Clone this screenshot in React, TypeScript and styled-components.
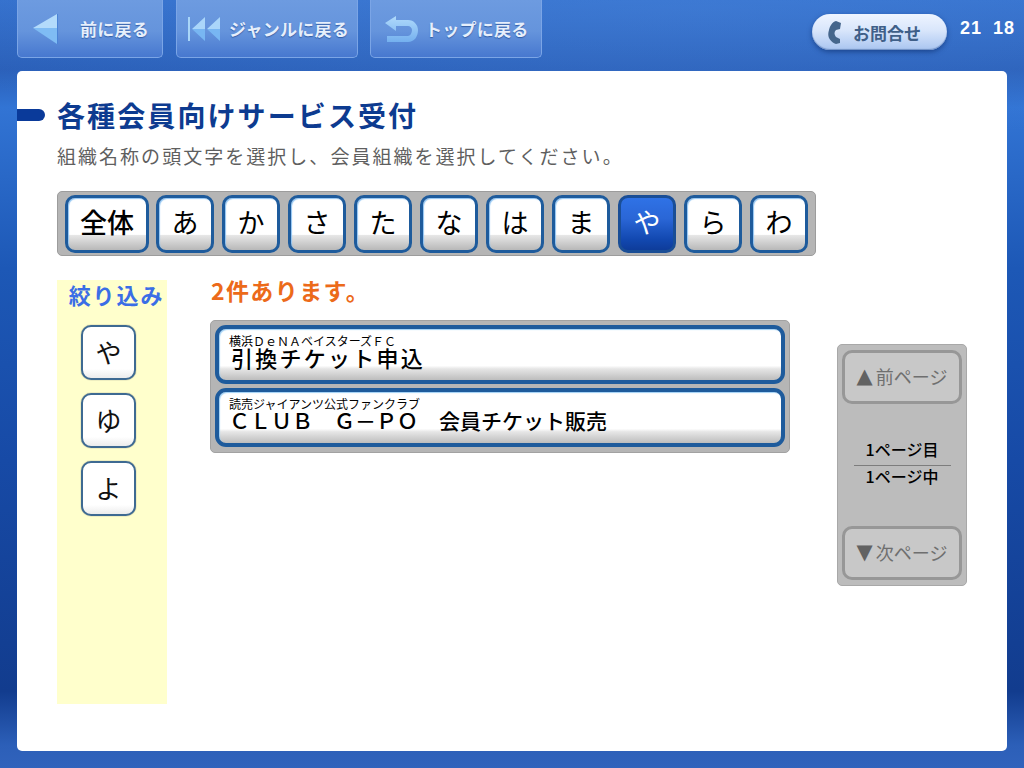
import React from 'react'
import styled, { createGlobalStyle } from 'styled-components'

const GlobalStyle = createGlobalStyle`
    html, body { margin: 0; padding: 0; }
    body { font-family: "Noto Sans CJK JP", "Noto Sans", sans-serif; }
    * { box-sizing: border-box; }
`

const Page = styled.div`
    width: 1024px;
    height: 768px;
    overflow: hidden;
    display: flex;
    flex-direction: column;
    padding: 0 9px 0 17px;
    background:
        radial-gradient(ellipse 900px 130px at 700px 10px, rgba(80, 140, 225, 0.35), transparent),
        linear-gradient(180deg, #3470cc 0%, #2a5fb8 9%, #3274d4 14%, #1d58b6 35%, #174aa6 60%, #123c8e 90%, #2c5fb8 97%, #3163bc 100%);
`

const Header = styled.header`
    height: 71px;
    flex: none;
    display: flex;
    align-items: flex-start;
`

const NavButton = styled.div<{ $width: number; $gap: number; $textStart: number }>`
    width: ${(p) => p.$width}px;
    height: 58px;
    margin-right: ${(p) => p.$gap}px;
    display: grid;
    grid-template-columns: ${(p) => p.$textStart}px 1fr;
    align-items: center;
    color: #e6effc;
    font-size: 17px;
    font-weight: 700;
    letter-spacing: 0.25px;
    line-height: 54px;
    white-space: nowrap;
    border: 1px solid #7ba5e6;
    border-top: none;
    border-radius: 0 0 5px 5px;
    background: linear-gradient(180deg, #6d9be0 0%, #6594dc 55%, #4778cf 100%);
    text-shadow: 0 1px 1px rgba(20, 60, 130, 0.6);
`

const NavIcon = styled.svg<{ $left: number }>`
    display: block;
    justify-self: start;
    margin-left: ${(p) => p.$left}px;
`

const ContactPill = styled.div`
    width: 135px;
    height: 36px;
    margin: 14px 13px 0 auto;
    padding-left: 16px;
    display: flex;
    align-items: center;
    gap: 11px;
    border-radius: 18px;
    color: #3f5f88;
    font-size: 17px;
    font-weight: 700;
    background: linear-gradient(180deg, #eef4ff 0%, #d9e6fb 45%, #a9c5f0 100%);
    box-shadow: 0 2px 5px rgba(10, 40, 100, 0.55), inset 0 -1px 1px #6f8fc4;
`

const Clock = styled.div`
    margin-top: 17px;
    width: 55px;
    display: flex;
    justify-content: space-between;
    color: #fff;
    font-family: "Liberation Sans", sans-serif;
    font-size: 18px;
    font-weight: 700;
    letter-spacing: 1px;
    line-height: 22px;
`

const Card = styled.main`
    width: 990px;
    height: 680px;
    flex: none;
    padding-top: 25px;
    background: #fff;
    border-radius: 5px;
`

const TitleRow = styled.div`
    display: flex;
    align-items: center;
    gap: 12px;
    height: 38px;
`

const TitleDash = styled.div`
    width: 28px;
    height: 12px;
    background: #0a3a9a;
    border-radius: 0 6px 6px 0;
`

const Title = styled.h1`
    margin: 0;
    color: #0d3b90;
    font-size: 28px;
    font-weight: 700;
    letter-spacing: 2.1px;
    line-height: 38px;
`

const Subtitle = styled.p`
    margin: 7px 0 0 40px;
    color: #5f5f5f;
    font-size: 19px;
    letter-spacing: 2.03px;
    line-height: 30px;
`

const IndexBar = styled.div`
    width: 759px;
    height: 65px;
    margin: 20px 0 0 40px;
    padding: 3px 7px;
    display: flex;
    gap: 8px;
    background: #b5b5b5;
    border: 1px solid #9c9c9c;
    border-radius: 5px;
`

const IndexKey = styled.div<{ $wide?: boolean; $active?: boolean }>`
    width: ${(p) => (p.$wide ? 84 : 58)}px;
    margin-right: ${(p) => (p.$wide ? -1 : 0)}px;
    height: 58px;
    display: flex;
    align-items: center;
    justify-content: center;
    padding-bottom: 5px;
    font-size: 27px;
    font-weight: ${(p) => (p.$wide ? 500 : 400)};
    color: ${(p) => (p.$active ? '#fff' : '#000')};
    border: 3px solid ${(p) => (p.$active ? '#1a4e96' : '#1e5b9c')};
    border-radius: 10px;
    background: ${(p) =>
        p.$active
            ? 'linear-gradient(180deg, #2f72e6 0%, #2a66d6 40%, #1248b0 80%, #0e3c9a 100%)'
            : 'linear-gradient(180deg, #fff 0%, #fff 70%, #e6e6e6 72%, #b8b8b8 100%)'};
    box-shadow: ${(p) => (p.$active ? 'none' : 'inset 1px 1px 1px #8fc4f2')};
`

const Body = styled.div`
    flex: 1;
    display: flex;
    margin: 24px 0 0 40px;
`

const Sidebar = styled.aside`
    width: 110px;
    height: 424px;
    flex: none;
    padding-top: 1px;
    display: flex;
    flex-direction: column;
    align-items: center;
    gap: 13px;
    background: #ffffcc;
`

const SidebarLabel = styled.div`
    margin-left: 9px;
    height: 31px;
    color: #3b6ee6;
    font-size: 22px;
    font-weight: 700;
    line-height: 26px;
    white-space: nowrap;
    letter-spacing: 1.9px;
`

const FilterKey = styled.div`
    width: 55px;
    height: 55px;
    margin-right: 7px;
    display: flex;
    align-items: center;
    justify-content: center;
    padding-bottom: 3px;
    font-size: 26px;
    color: #111;
    background: linear-gradient(180deg, #fff 0%, #fff 82%, #ececec 100%);
    border: 2px solid #3e6a92;
    border-radius: 10px;
    box-shadow: 0 0 1px #555;
`

const Results = styled.section`
    width: 580px;
    margin-left: 43px;
    flex: none;
`

const ResultCount = styled.div`
    margin-left: 1px;
    color: #ec6a1a;
    font-size: 23px;
    font-weight: 700;
    line-height: 20px;
    letter-spacing: 1.4px;
`

const ListPanel = styled.div`
    height: 133px;
    margin-top: 20px;
    padding: 4px;
    display: flex;
    flex-direction: column;
    gap: 4px;
    background: #b5b5b5;
    border: 1px solid #a2a2a2;
    border-radius: 5px;
`

const ListRow = styled.div`
    height: 59px;
    padding: 5px 0 0 10px;
    border: 4px solid #1e5b9c;
    border-radius: 11px;
    background: linear-gradient(180deg, #fff 0%, #fff 72%, #e6e6e6 78%, #bdbdbd 100%);
    box-shadow: inset 1px 1px 1px #9fd0f5;
    color: #000;
`

const RowCaption = styled.div`
    font-size: 12px;
    line-height: 13px;
    white-space: nowrap;
`

const RowTitle = styled.div<{ $size: number; $spacing: number; $indent: number }>`
    margin-left: ${(p) => p.$indent}px;
    font-size: ${(p) => p.$size}px;
    font-weight: 500;
    letter-spacing: ${(p) => p.$spacing}px;
    line-height: 20px;
    white-space: nowrap;
`

const Pager = styled.aside`
    width: 130px;
    height: 242px;
    margin: 64px 0 0 47px;
    flex: none;
    padding: 5px 4px;
    display: flex;
    flex-direction: column;
    justify-content: space-between;
    background: #bcbcbc;
    border: 1px solid #a8a8a8;
    border-radius: 5px;
`

const PagerButton = styled.div`
    height: 54px;
    padding-bottom: 2px;
    display: flex;
    align-items: center;
    justify-content: center;
    gap: 3px;
    color: #6f6f6f;
    font-size: 18px;
    white-space: nowrap;
    background: #c8c8c8;
    border: 3px solid #979797;
    border-radius: 10px;
`

const PagerArrow = styled.span`
    font-family: "DejaVu Sans", sans-serif;
    font-size: 21px;
    line-height: 24px;
    color: #626262;
`

const PageInfo = styled.div`
    width: 97px;
    margin: 0 auto;
    padding-bottom: 8px;
    text-align: center;
    font-size: 16px;
    font-weight: 500;
    line-height: 20px;
    color: #000;
`

const PageLine = styled.div`
    padding-bottom: 4px;
    line-height: 24px;
    border-bottom: 1px solid #7d7d7d;
`

const BackIcon = () => (
    <NavIcon $left={15} width="25" height="34" viewBox="33 12 25 34">
        <path d="M57 14 L33 28 H57 Z" fill="#b3dbfb" />
        <path d="M33 28 L57 44 V28 Z" fill="#7fbcf4" />
        <path d="M57 14 H58 V44 H57 Z" fill="#4a83d6" />
    </NavIcon>
)

const GenreIcon = () => (
    <NavIcon $left={10} width="33" height="34" viewBox="186 11 33 34">
        <rect x="187" y="16" width="2" height="24" fill="#a9d6f8" />
        <path d="M204 16 L191 28 H204 Z M219 16 L206 28 H219 Z" fill="#aad6fa" />
        <path d="M204 40 L191 28 H204 Z M219 40 L206 28 H219 Z" fill="#78b6f2" />
    </NavIcon>
)

const TopIcon = () => (
    <NavIcon $left={14} width="34" height="34" viewBox="385 10 34 34">
        <defs>
            <linearGradient id="topIconFill" x1="0" y1="0" x2="0" y2="1">
                <stop offset="0" stopColor="#b0dafb" />
                <stop offset="1" stopColor="#74b0ef" />
            </linearGradient>
        </defs>
        <path
            d="M385 21 L396 14 V18 H408 C414 18 418 23 418 28 C418 35 414 40 408 40 H387 V34 H408 C410 34 412 31 412 28 C412 26 410 24 408 24 H396 V29 Z"
            fill="url(#topIconFill)"
        />
    </NavIcon>
)

const PhoneIcon = () => (
    <svg width="14" height="23" viewBox="0 0 14 23">
        <path
            d="M8 0 L13 2 L12 8 L8 9 C6 11 6 13 8 16 L12 18 L12 22 L8 23 C1 20 -1 15 1 9 C2 5 4 1 8 0 Z"
            fill="#45668c"
        />
    </svg>
)

const keys = ['あ', 'か', 'さ', 'た', 'な', 'は', 'ま', 'や', 'ら', 'わ']

const App = () => (
    <>
        <GlobalStyle />
        <Page>
            <Header>
                <NavButton $width={146} $gap={13} $textStart={62}>
                    <BackIcon />
                    <span>前に戻る</span>
                </NavButton>
                <NavButton $width={182} $gap={12} $textStart={52}>
                    <GenreIcon />
                    <span>ジャンルに戻る</span>
                </NavButton>
                <NavButton $width={172} $gap={0} $textStart={54}>
                    <TopIcon />
                    <span>トップに戻る</span>
                </NavButton>
                <ContactPill>
                    <PhoneIcon />
                    お問合せ
                </ContactPill>
                <Clock>
                    <span>21</span>
                    <span>18</span>
                </Clock>
            </Header>
            <Card>
                <TitleRow>
                    <TitleDash />
                    <Title>各種会員向けサービス受付</Title>
                </TitleRow>
                <Subtitle>組織名称の頭文字を選択し、会員組織を選択してください。</Subtitle>
                <IndexBar>
                    <IndexKey $wide>全体</IndexKey>
                    {keys.map((key) => (
                        <IndexKey key={key} $active={key === 'や'}>
                            {key}
                        </IndexKey>
                    ))}
                </IndexBar>
                <Body>
                    <Sidebar>
                        <SidebarLabel>絞り込み</SidebarLabel>
                        <FilterKey>や</FilterKey>
                        <FilterKey>ゆ</FilterKey>
                        <FilterKey>よ</FilterKey>
                    </Sidebar>
                    <Results>
                        <ResultCount>2件あります。</ResultCount>
                        <ListPanel>
                            <ListRow>
                                <RowCaption>横浜ＤｅＮＡベイスターズＦＣ</RowCaption>
                                <RowTitle $size={22} $spacing={2.25} $indent={2}>引換チケット申込</RowTitle>
                            </ListRow>
                            <ListRow>
                                <RowCaption>読売ジャイアンツ公式ファンクラブ</RowCaption>
                                <RowTitle $size={21} $spacing={0} $indent={0}>ＣＬＵＢ　Ｇ－ＰＯ　会員チケット販売</RowTitle>
                            </ListRow>
                        </ListPanel>
                    </Results>
                    <Pager>
                        <PagerButton>
                            <PagerArrow>▲</PagerArrow>前ページ
                        </PagerButton>
                        <PageInfo>
                            <PageLine>1ページ目</PageLine>
                            1ページ中
                        </PageInfo>
                        <PagerButton>
                            <PagerArrow>▼</PagerArrow>次ページ
                        </PagerButton>
                    </Pager>
                </Body>
            </Card>
        </Page>
    </>
)

export default App
